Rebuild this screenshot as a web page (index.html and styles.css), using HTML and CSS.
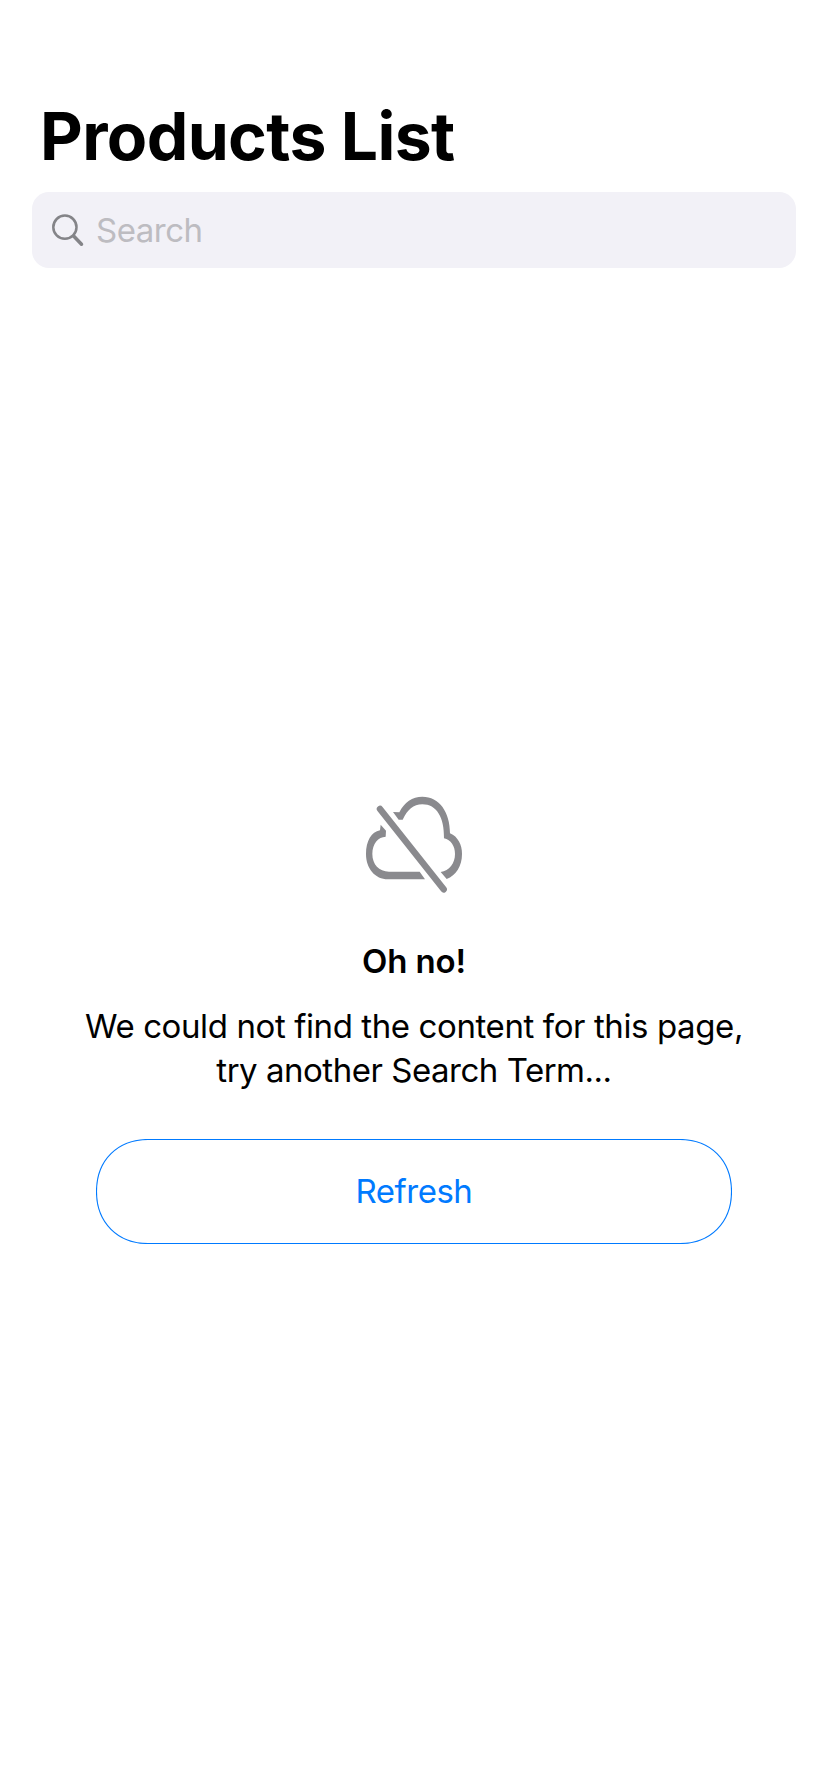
FILE: index.html
```html
<!DOCTYPE html>
<html lang="en">
<head>
<meta charset="utf-8">
<title>Products List</title>
<link rel="stylesheet" href="styles.css">
</head>
<body>
<main class="screen">
  <header class="header">
    <h1 class="title">Products List</h1>
    <div class="search">
      <svg class="search-icon" viewBox="0 0 32 34" aria-hidden="true">
        <circle cx="12.9" cy="14.2" r="11.6" fill="none" stroke="#848488" stroke-width="2.5"/>
        <path d="M21.6 23 29.5 31.2" stroke="#848488" stroke-width="3.5" stroke-linecap="round"/>
      </svg>
      <span class="placeholder">Search</span>
    </div>
  </header>
  <section class="empty">
    <svg class="cloud" viewBox="0 0 384 384" aria-hidden="true">
      <g fill="#8a8a8e">
        <path d="M129 96L148 97C163 67 187 50 217 50C268 50 300 96 300 160C324 170 336 195 336 222C336 258 318 287 290 297L272 276C298 273 315 250 315 222C315 198 303 180 282 175C283 112 260 73 217 73C190 73 172 90 158 119L146 119Z"/>
        <path d="M92 134L108 152L107 170C85 171 67 190 67 222C67 253 87 275 117 275L209 275L225 298L114 298C75 298 48 265 48 222C48 184 64 155 90 151Z"/>
      </g>
      <path d="M90 87L281 328" stroke="#8a8a8e" stroke-width="19.5" stroke-linecap="round"/>
    </svg>
    <h2 class="heading">Oh no!</h2>
    <p class="message"><span class="line-one">We could not find the content for this page,</span><br><span class="line-two">try another Search Term...</span></p>
    <button class="refresh" type="button">
      <svg class="outline" viewBox="0 0 636 105" aria-hidden="true">
        <path d="M52 .5H584C614 .5 635.5 21 635.5 52.5S614 104.5 584 104.5H52C22 104.5 .5 84 .5 52.5S22 .5 52 .5Z" fill="none" stroke="#007aff" stroke-width="1.1"/>
      </svg>
      <span class="label">Refresh</span>
    </button>
  </section>
</main>
</body>
</html>
```
FILE: styles.css
```css
body {
  margin: 0;
  background: #fff;
  color: #000;
  font-family: Inter, "Liberation Sans", sans-serif;
}

.screen {
  box-sizing: border-box;
  height: 1792px;
  padding-top: 96px;
}

.header {
  height: 172px;
  padding: 0 32px;
}

.title {
  margin: 0;
  padding-left: 8px;
  height: 96px;
  font-size: 66px;
  line-height: 80px;
  font-weight: 700;
  letter-spacing: -0.62px;
  white-space: nowrap;
}

.search {
  display: flex;
  align-items: center;
  height: 76px;
  padding-left: 20px;
  border-radius: 17px;
  background: #f2f1f7;
}

.search-icon {
  width: 32px;
  height: 34px;
  margin-right: 12px;
}

.placeholder {
  font-size: 33px;
  line-height: 40px;
  color: #bdbcc1;
  letter-spacing: -0.5px;
}

.empty {
  display: flex;
  flex-direction: column;
  align-items: center;
  padding-top: 512px;
}

.cloud {
  width: 128px;
  height: 128px;
}

.heading {
  margin: 33px 0 0;
  font-size: 33px;
  line-height: 40px;
  font-weight: 600;
  letter-spacing: -0.15px;
}

.message {
  margin: 23px 0 0;
  font-size: 33px;
  line-height: 44px;
  text-align: center;
  white-space: nowrap;
}

.line-one {
  letter-spacing: -0.4px;
}

.line-two {
  letter-spacing: -0.48px;
}

.refresh {
  position: relative;
  width: 636px;
  height: 105px;
  margin: 47px 0 0;
  padding: 0 0 2px;
  border: 0;
  background: none;
  color: #007aff;
  font: 400 33px/40px Inter, "Liberation Sans", sans-serif;
  letter-spacing: -0.5px;
}

.outline {
  position: absolute;
  inset: 0;
  width: 636px;
  height: 105px;
}
```
